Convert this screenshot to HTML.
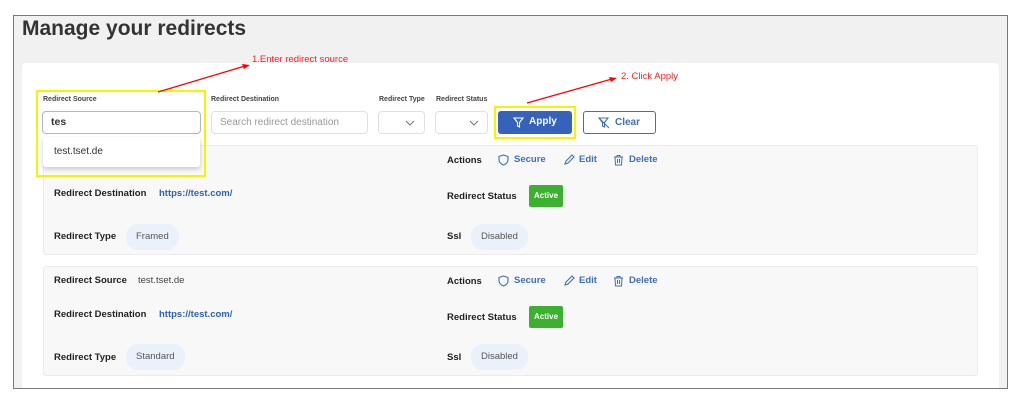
<!DOCTYPE html>
<html><head><meta charset="utf-8"><style>
*{box-sizing:border-box;margin:0;padding:0}
body{width:1024px;height:403px;background:#fff;font-family:"Liberation Sans",sans-serif;position:relative;overflow:hidden}
.a{position:absolute}
.frame{left:13px;top:15px;width:995px;height:374px;border:1px solid #777;background:#f1f1f1;overflow:hidden}
.panel{left:8px;top:47px;width:977px;height:340px;background:#fff;border-radius:4px}
.lbl{font-size:7px;color:#444;font-weight:bold}
.inp{border:1px solid #dde1e6;border-radius:4px;background:#fff;height:23px}
.card{left:43px;width:935px;height:110px;background:#f8f8f8;border:1px solid #ebebeb;border-radius:3px}
.k{font-size:9.5px;font-weight:bold;color:#222}
.v{font-size:9.5px;color:#444}
.link{font-size:9.5px;color:#2e63b8;font-weight:bold}
.pill{background:#eaf1fb;border-radius:12px;height:26px;line-height:26px;font-size:9.5px;color:#555;padding:0 10px}
.act{background:#3cb12f;color:#fff;font-size:8px;font-weight:bold;height:22px;line-height:22px;padding:0 5px;border-radius:2px}
.ac{font-size:9.5px;color:#3d6fc0;font-weight:bold}
.red{color:#ff2020;font-size:9.5px}
</style></head><body>
<div class="a frame"><div class="a panel"></div></div>
<div class="a" style="left:22px;top:17px;font-size:21px;font-weight:bold;color:#333">Manage your redirects</div>

<div class="a lbl" style="left:43px;top:96px">Redirect Source</div>
<div class="a lbl" style="left:211px;top:96px">Redirect Destination</div>
<div class="a lbl" style="left:379px;top:96px">Redirect Type</div>
<div class="a lbl" style="left:436px;top:96px">Redirect Status</div>
<div class="a inp" style="left:211px;top:111px;width:157px;font-size:10px;color:#999;padding:5px 8px">Search redirect destination</div>
<div class="a inp" style="left:378px;top:111px;width:47px"><svg class="a" style="left:26px;top:8px" width="10" height="6"><path d="M1 1l4 4 4-4" stroke="#777" fill="none"/></svg></div>
<div class="a inp" style="left:435px;top:111px;width:53px"><svg class="a" style="left:33px;top:8px" width="10" height="6"><path d="M1 1l4 4 4-4" stroke="#777" fill="none"/></svg></div>

<div class="a card" style="top:145px"></div>
<div class="a card" style="top:266px"></div>

<div class="a k" style="left:54px;top:154px">Redirect Source</div>
<div class="a v" style="left:138px;top:154px">test.tset.de</div>
<div class="a k" style="left:54px;top:188px">Redirect Destination</div>
<div class="a link" style="left:159px;top:188px">https://test.com/</div>
<div class="a k" style="left:54px;top:231px">Redirect Type</div>
<div class="a pill" style="left:126px;top:224px">Framed</div>
<div class="a k" style="left:447px;top:155px">Actions</div>
<div class="a k" style="left:447px;top:191px">Redirect Status</div>
<div class="a act" style="left:529px;top:185px">Active</div>
<div class="a k" style="left:447px;top:231px">Ssl</div>
<div class="a pill" style="left:471px;top:224px">Disabled</div>

<div class="a k" style="left:54px;top:275px">Redirect Source</div>
<div class="a v" style="left:138px;top:275px">test.tset.de</div>
<div class="a k" style="left:54px;top:309px">Redirect Destination</div>
<div class="a link" style="left:159px;top:309px">https://test.com/</div>
<div class="a k" style="left:54px;top:352px">Redirect Type</div>
<div class="a pill" style="left:126px;top:344px">Standard</div>
<div class="a k" style="left:447px;top:276px">Actions</div>
<div class="a k" style="left:447px;top:312px">Redirect Status</div>
<div class="a act" style="left:529px;top:306px">Active</div>
<div class="a k" style="left:447px;top:352px">Ssl</div>
<div class="a pill" style="left:471px;top:344px">Disabled</div>

<div class="a" style="left:498px;top:154px;width:170px;height:14px">
<svg class="a" style="left:0;top:0" width="11" height="12"><path d="M5.5 1L10 2.5V6c0 2.5-2 4-4.5 5C3 10 1 8.5 1 6V2.5z" stroke="#3d6fc0" fill="none" stroke-width="1.1"/></svg>
<span class="a ac" style="left:16px;top:0">Secure</span>
<svg class="a" style="left:65px;top:0" width="12" height="12"><path d="M2 10l1-3 6-6 2 2-6 6z" stroke="#3d6fc0" fill="none" stroke-width="1.1"/></svg>
<span class="a ac" style="left:81px;top:0">Edit</span>
<svg class="a" style="left:115px;top:0" width="11" height="12"><path d="M1 3h9M4 3V1.5h3V3M2 3l.5 8h6L9 3M4.5 5v4M6.5 5v4" stroke="#3d6fc0" fill="none" stroke-width="1"/></svg>
<span class="a ac" style="left:131px;top:0">Delete</span>
</div>
<div class="a" style="left:498px;top:275px;width:170px;height:14px">
<svg class="a" style="left:0;top:0" width="11" height="12"><path d="M5.5 1L10 2.5V6c0 2.5-2 4-4.5 5C3 10 1 8.5 1 6V2.5z" stroke="#3d6fc0" fill="none" stroke-width="1.1"/></svg>
<span class="a ac" style="left:16px;top:0">Secure</span>
<svg class="a" style="left:65px;top:0" width="12" height="12"><path d="M2 10l1-3 6-6 2 2-6 6z" stroke="#3d6fc0" fill="none" stroke-width="1.1"/></svg>
<span class="a ac" style="left:81px;top:0">Edit</span>
<svg class="a" style="left:115px;top:0" width="11" height="12"><path d="M1 3h9M4 3V1.5h3V3M2 3l.5 8h6L9 3M4.5 5v4M6.5 5v4" stroke="#3d6fc0" fill="none" stroke-width="1"/></svg>
<span class="a ac" style="left:131px;top:0">Delete</span>
</div>

<div class="a" style="left:43px;top:137px;width:157px;height:30px;background:#fff;box-shadow:0 2px 5px rgba(0,0,0,.2);border-radius:3px"></div>
<div class="a" style="left:54px;top:146px;font-size:10px;color:#333">test.tset.de</div>
<div class="a inp" style="left:42px;top:111px;width:159px;border:1.5px solid #a8b8d8;font-size:10.5px;color:#333;padding:4px 8px;font-weight:bold">tes</div>
<div class="a" style="left:36px;top:90px;width:170px;height:87px;border:2px solid #f5f500"></div>

<div class="a" style="left:494px;top:106px;width:82px;height:33px;border:2px solid #f5f500"></div>
<div class="a" style="left:498px;top:111px;width:74px;height:23px;background:#3562bb;border-radius:3px;color:#fff;font-size:10px;font-weight:bold">
<svg class="a" style="left:15px;top:6px" width="11" height="11"><path d="M1 1h9L6.5 5.5V10L4.5 9V5.5z" stroke="#fff" fill="none" stroke-width="1.1"/></svg>
<span class="a" style="left:31px;top:5px">Apply</span></div>
<div class="a" style="left:583px;top:111px;width:73px;height:23px;border:1px solid #3d6fc0;border-radius:3px;color:#3d6fc0;font-size:10px;font-weight:bold;background:#fff">
<svg class="a" style="left:14px;top:5px" width="12" height="12"><path d="M1 1h9L6.5 5.5V10L4.5 9V5.5zM1 1l10 10" stroke="#3d6fc0" fill="none" stroke-width="1.1"/></svg>
<span class="a" style="left:31px;top:5px">Clear</span></div>

<svg class="a" style="left:0;top:0" width="1024" height="403"><path d="M158 92L245 66" stroke="#f00" stroke-width="1.2"/><path d="M250 65l-8 -1 2 5z" fill="#f00"/>
<path d="M527 103L612 79" stroke="#f00" stroke-width="1.2"/><path d="M617 78l-8-1 2 5z" fill="#f00"/></svg>
<div class="a red" style="left:252px;top:54px">1.Enter redirect source</div>
<div class="a red" style="left:621px;top:71px">2. Click Apply</div>
</body></html>
